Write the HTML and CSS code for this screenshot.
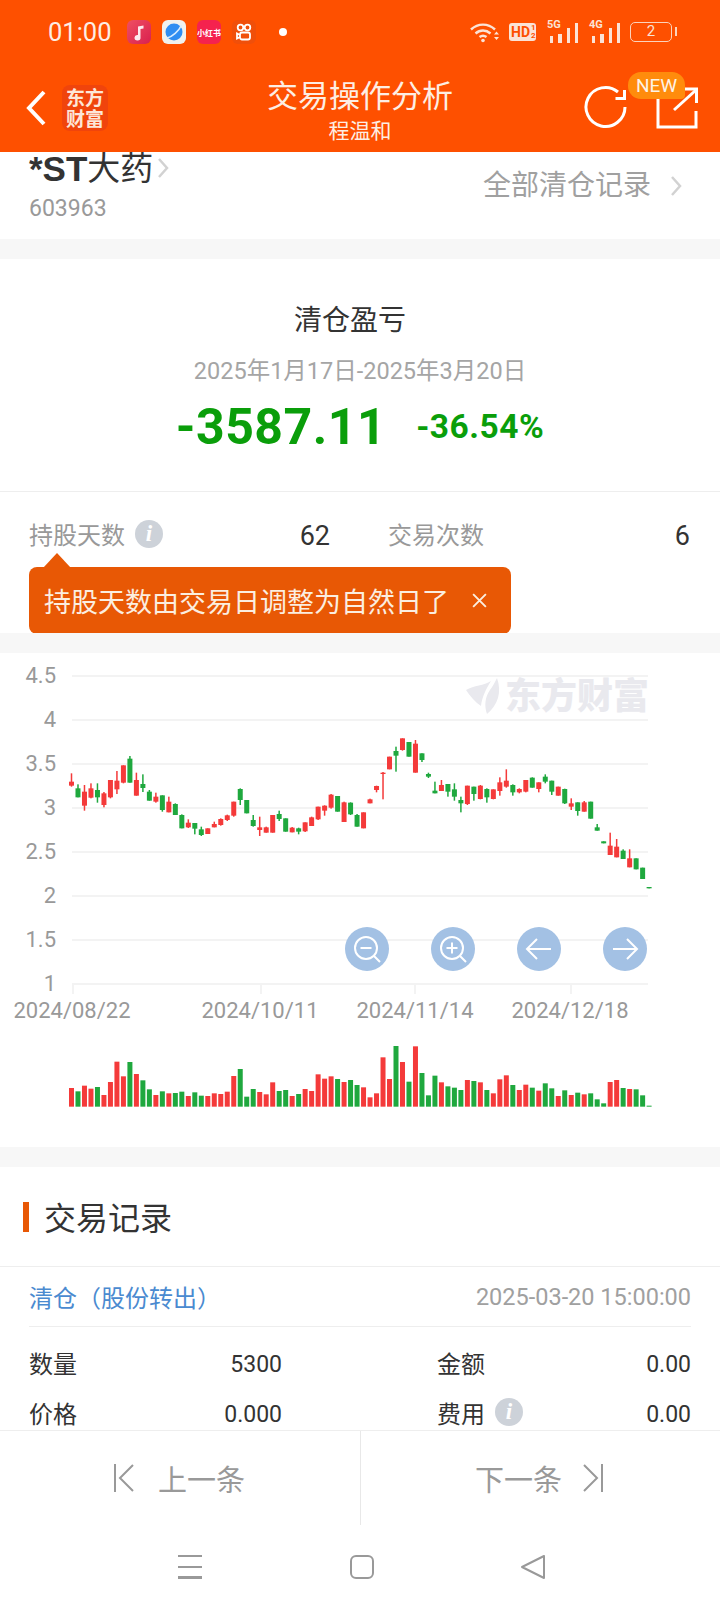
FILE: index.html
```html
<!DOCTYPE html>
<html lang="zh-CN">
  <head>
    <meta charset="UTF-8" />
    <meta name="viewport" content="width=device-width, initial-scale=1.0" />
    <title>交易操作分析</title>
    <link rel="stylesheet" href="styles.css">
  </head>
  <body>
    <header class="app-head">
      <div class="status-bar">
        <span class="clock">01:00</span>
        <span class="app-tile tile-music">
          <svg viewBox="0 0 24 24" width="24" height="24"><path d="M11 17V6.500L16.500 5.500V8.500L13.500 9V17.500A3 2.800 0 1 1 11 15" fill="#fff" opacity=".9"/></svg>
        </span>
        <span class="app-tile tile-planet">
          <svg viewBox="0 0 24 24" width="24" height="24"><circle cx="12" cy="12" r="8.500" fill="#2f8df2"/><path d="M5 18C10 17 17 11 19.500 5" stroke="#d8ecff" stroke-width="1.600" fill="none"/></svg>
        </span>
        <span class="app-tile tile-xhs">小红书</span>
        <span class="app-tile tile-ks">
          <svg viewBox="0 0 24 24" width="24" height="24" fill="none" stroke="#fff" stroke-width="1.800"><circle cx="8.500" cy="7.500" r="2.800"/><circle cx="15.500" cy="7.500" r="2.800"/><rect x="8" y="12.500" width="10" height="7" rx="2"/><path d="M8 15L5 13.500V18.500L8 17"/></svg>
        </span>
        <span class="status-dot"></span>
        <span class="status-right">
          <svg viewBox="0 0 30 24" width="30" height="24" fill="none" stroke="#fbe3d6" stroke-width="2.400"><path d="M1 9.500C8 3 18 3 25 9.500"/><path d="M5.500 13.500C10 9.500 16 9.500 20.500 13.500"/><path d="M9.500 17C11.500 15.500 14.500 15.500 16.500 17"/><circle cx="13" cy="20.500" r="1.800" fill="#fbe3d6" stroke="none"/><path d="M24 14.500H29L26.500 11.500ZM24 17H29L26.500 20Z" fill="#fbe3d6" stroke="none"/></svg>
          <span class="hd-tile">HD<small>1<br>2</small></span>
          <span class="signal"><i class="net">5G</i><i class="bar b1"></i><i class="bar b2"></i><i class="bar b3"></i><i class="bar b4"></i></span>
          <span class="signal"><i class="net">4G</i><i class="bar b1"></i><i class="bar b2"></i><i class="bar b3"></i><i class="bar b4"></i></span>
          <span class="battery">2</span>
        </span>
      </div>

      <div class="title-bar">
        <div class="title-left">
          <svg class="back" viewBox="0 0 20 36" width="20" height="36" fill="none" stroke="#fff" stroke-width="4"><path d="M18 2L3 18L18 34"/></svg>
          <span class="brand-tile">东方<br>财富</span>
        </div>
        <div class="title-text">
          <h1>交易操作分析</h1>
          <p>程温和</p>
        </div>
        <div class="title-right">
          <svg class="refresh" viewBox="0 0 46 46" width="46" height="46" fill="none" stroke="#fff" stroke-width="3"><path d="M42 23A19.500 19.500 0 1 1 35 8"/><path d="M41.500 6V14.500H32.500"/></svg>
          <svg viewBox="0 0 44 44" width="44" height="44" fill="none" stroke="#fff" stroke-width="3"><path d="M3 10V41H41V25"/><path d="M19 24L41 4"/><path d="M28 3H41.500V17"/></svg>
          <span class="new-badge">NEW</span>
        </div>
      </div>
    </header>

    <main class="content">
      <section class="stock-row">
        <div>
          <div class="stock-name"><b>*ST</b>大药<svg class="chevron" viewBox="0 0 12 22" width="12" height="22"><path d="M2 2L10 11L2 20"/></svg></div>
          <div class="stock-code">603963</div>
        </div>
        <a class="all-link">全部清仓记录<svg class="chevron" viewBox="0 0 12 22" width="12" height="22"><path d="M2 2L10 11L2 20"/></svg></a>
      </section>

      <section class="summary">
        <h2>清仓盈亏</h2>
        <p class="period">2025年1月17日-2025年3月20日</p>
        <div class="profit">
          <span class="profit-num">-3587.11</span>
          <span class="profit-pct">-36.54%</span>
        </div>
      </section>

      <section class="holding">
        <div class="holding-row">
          <span class="hold-label">持股天数 <i class="info">i</i></span>
          <span class="hold-val">62</span>
          <span class="hold-label trade-label">交易次数</span>
          <span class="hold-val">6</span>
        </div>
        <div class="tooltip">
          <span>持股天数由交易日调整为自然日了</span>
          <svg viewBox="0 0 16 16" width="17" height="17" fill="none" stroke="#fbeee0" stroke-width="1.800"><path d="M2 2L14 14M14 2L2 14"/></svg>
        </div>
      </section>

      <section class="chart-card">
        <svg id="kline" viewBox="0 653 720 494" width="720" height="494">
          <g class="watermark">
            <path d="M466 690C474 685 484 686 491 681C486 689 482 697 481 706C475 702 470 696 466 690Z"/>
            <path d="M497 678C502 692 498 705 487 714C484 706 485 697 490 690C493 686 495 682 497 678Z"/>
            <text x="505" y="709">东方财富</text>
          </g>
          <g class="grid">
            <line x1="72" x2="648" y1="676" y2="676"/>
            <line x1="72" x2="648" y1="720" y2="720"/>
            <line x1="72" x2="648" y1="764" y2="764"/>
            <line x1="72" x2="648" y1="808" y2="808"/>
            <line x1="72" x2="648" y1="852" y2="852"/>
            <line x1="72" x2="648" y1="896" y2="896"/>
            <line x1="72" x2="648" y1="940" y2="940"/>
            <line x1="72" x2="648" y1="984" y2="984"/>
            <line x1="73" x2="73" y1="984" y2="994"/>
            <line x1="261" x2="261" y1="984" y2="994"/>
            <line x1="415" x2="415" y1="984" y2="994"/>
            <line x1="571" x2="571" y1="984" y2="994"/>
          </g>
          <g class="y-labels">
            <text x="56" y="683">4.5</text>
            <text x="56" y="727">4</text>
            <text x="56" y="771">3.5</text>
            <text x="56" y="815">3</text>
            <text x="56" y="859">2.5</text>
            <text x="56" y="903">2</text>
            <text x="56" y="947">1.5</text>
            <text x="56" y="991">1</text>
          </g>
          <g class="x-labels">
            <text x="72" y="1018">2024/08/22</text>
            <text x="260" y="1018">2024/10/11</text>
            <text x="415" y="1018">2024/11/14</text>
            <text x="570" y="1018">2024/12/18</text>
          </g>
          <g id="candles"></g>
          <g id="volumes"></g>
        </svg>
        <div class="chart-tools">
          <button class="tool-btn">
            <svg viewBox="0 0 44 44" width="44" height="44" fill="none" stroke="#fff" stroke-width="2"><circle cx="21" cy="21" r="11"/><path d="M15.500 21H26.500M29 29L35 35"/></svg>
          </button>
          <button class="tool-btn">
            <svg viewBox="0 0 44 44" width="44" height="44" fill="none" stroke="#fff" stroke-width="2"><circle cx="21" cy="21" r="11"/><path d="M15.500 21H26.500M21 15.500V26.500M29 29L35 35"/></svg>
          </button>
          <button class="tool-btn">
            <svg viewBox="0 0 44 44" width="44" height="44" fill="none" stroke="#fff" stroke-width="2"><path d="M34 22H10M20 12L10 22L20 32"/></svg>
          </button>
          <button class="tool-btn">
            <svg viewBox="0 0 44 44" width="44" height="44" fill="none" stroke="#fff" stroke-width="2"><path d="M10 22H34M24 12L34 22L24 32"/></svg>
          </button>
        </div>
      </section>

      <section class="records">
        <h3 class="records-title">交易记录</h3>
        <div class="record">
          <div class="record-head">
            <a class="record-type">清仓（股份转出）</a>
            <span class="record-time">2025-03-20 15:00:00</span>
          </div>
          <div class="record-grid">
            <div class="cell"><span>数量</span><b>5300</b></div>
            <div class="cell"><span>金额</span><b>0.00</b></div>
            <div class="cell"><span>价格</span><b>0.000</b></div>
            <div class="cell"><span>费用 <i class="info">i</i></span><b>0.00</b></div>
          </div>
        </div>
      </section>
    </main>

    <footer class="pager">
      <a class="pager-btn">
        <svg viewBox="0 0 24 28" width="24" height="28" fill="none" stroke="#999" stroke-width="2"><path d="M2 0V28M20 1L7 14L20 27"/></svg>
        <span>上一条</span>
      </a>
      <a class="pager-btn pager-next">
        <span>下一条</span>
        <svg viewBox="0 0 24 28" width="24" height="28" fill="none" stroke="#999" stroke-width="2"><path d="M22 0V28M4 1L17 14L4 27"/></svg>
      </a>
    </footer>

    <nav class="nav-bar">
      <svg viewBox="0 0 24 24" width="24" height="24" fill="none" stroke="#999" stroke-width="2"><path d="M0 1H24M0 12H24"/><path d="M0 22.500H24" stroke-width="3"/></svg>
      <svg viewBox="0 0 24 24" width="24" height="24" fill="none" stroke="#999" stroke-width="2"><rect x="1" y="1" width="22" height="22" rx="5"/></svg>
      <svg class="nav-back" viewBox="0 0 24 24" width="24" height="24" fill="none" stroke="#999" stroke-width="2" stroke-linejoin="round"><path d="M23 1V23L1 12Z"/></svg>
    </nav>

    <script src="chart.js"></script>
  </body>
</html>
```

FILE: styles.css
```css
* {
  margin: 0;
  padding: 0;
  box-sizing: border-box;
}

html,
body {
  width: 720px;
  height: 1612px;
  overflow: hidden;
}

body {
  display: flex;
  flex-direction: column;
  font-family: Roboto, "Noto Sans CJK SC", sans-serif;
  background-color: #fff;
  color: #333;
}

i {
  font-style: normal;
}

/* orange header */
.app-head {
  background-color: #fe5000;
  color: #fff;
  flex: none;
}

.status-bar {
  height: 64px;
  padding-left: 48px;
  display: flex;
  align-items: center;
}

.clock {
  font-size: 25.500px;
  width: 79px;
  color: #fdeee4;
}

.app-tile {
  width: 24px;
  height: 24px;
  border-radius: 6px;
  margin-right: 11px;
  display: grid;
  place-content: center;
  overflow: hidden;
}

.tile-music {
  background: linear-gradient(135deg, #ef4f62, #d9204f);
}

.tile-planet {
  background-color: #f1f1ee;
}

.tile-xhs {
  background-color: #f5224e;
  font-size: 8px;
  font-weight: 700;
  white-space: nowrap;
}

.tile-ks {
  background-color: #f04f0a;
}

.status-dot {
  width: 8px;
  height: 8px;
  border-radius: 50%;
  background-color: #fff;
  margin-left: 12px;
}

.status-right {
  margin-left: auto;
  margin-right: 48px;
  display: flex;
  align-items: center;
}

.hd-tile {
  width: 27px;
  height: 18px;
  margin-left: 9px;
  border-radius: 3px;
  background-color: #fbe3d6;
  color: #fe5000;
  font-size: 14px;
  font-weight: 700;
  line-height: 18px;
  display: flex;
  padding-left: 2px;
  overflow: hidden;
}

.hd-tile small {
  font-size: 8px;
  line-height: 8px;
  margin-left: 1px;
  padding-top: 1px;
}

.signal {
  position: relative;
  width: 31px;
  height: 22px;
  margin-left: 11px;
  display: flex;
  align-items: flex-end;
  gap: 5px;
  padding-left: 3px;
}

.bar {
  width: 3.500px;
  background-color: #fbe3d6;
}

.b1 {
  height: 7px;
}

.b2 {
  height: 9px;
}

.b3 {
  height: 15px;
}

.b4 {
  height: 20px;
}

.net {
  position: absolute;
  left: 0;
  top: -2px;
  font-size: 11px;
  font-weight: 700;
  color: #fbe3d6;
  line-height: 12px;
}

.battery {
  width: 42px;
  height: 20px;
  margin-left: 10px;
  border: 1.500px solid #fbd3bd;
  border-radius: 5px;
  font-size: 15px;
  line-height: 17px;
  text-align: center;
  color: #fbe3d6;
  position: relative;
}

.battery::after {
  content: "";
  position: absolute;
  right: -6px;
  top: 4px;
  width: 2px;
  height: 9px;
  background-color: #fbd3bd;
}

.title-bar {
  height: 88px;
  display: grid;
  grid-template-columns: 200px 320px 200px;
  position: relative;
}

.title-left {
  display: flex;
  align-items: center;
  padding-left: 26px;
  gap: 16px;
}

.brand-tile {
  width: 46px;
  height: 46px;
  border-radius: 8px;
  background-color: #f0440c;
  color: #fde6d8;
  font-size: 19px;
  font-weight: 700;
  line-height: 21px;
  text-align: center;
  padding-top: 3px;
}

.title-text {
  text-align: center;
}

.title-text h1 {
  font-size: 31px;
  font-weight: 400;
  line-height: 36px;
  margin-top: 15px;
  color: #fdeee4;
}

.title-text p {
  font-size: 21px;
  line-height: 28px;
  margin-top: 2px;
  color: #fdeee4;
}

.title-right {
  display: flex;
  align-items: center;
  justify-content: flex-end;
  gap: 26px;
  padding-right: 21px;
}

.refresh {
  margin-top: -2px;
}

.new-badge {
  position: absolute;
  left: 628px;
  top: 8px;
  width: 57px;
  height: 27px;
  border-radius: 13px 13px 4px 13px;
  background-color: #ff8c0c;
  font-size: 19px;
  line-height: 27px;
  text-align: center;
  color: #fdf3e6;
}

/* scrolling area */
.content {
  flex: 1;
}

.stock-row {
  height: 87px;
  padding: 0 38px 0 29px;
  display: flex;
  justify-content: space-between;
}

.stock-name {
  font-size: 33px;
  line-height: 34px;
  font-weight: 400;
  display: flex;
  align-items: flex-start;
}

.stock-name b {
  font-family: "Liberation Sans", sans-serif;
  font-size: 35px;
  font-weight: 700;
}

.stock-name .chevron {
  margin: 5px 0 0 4px;
}

.stock-code {
  font-size: 23px;
  line-height: 28px;
  color: #999;
  margin-top: 9px;
}

.chevron {
  fill: none;
  stroke: #d2d2d2;
  stroke-width: 2.500;
}

.all-link {
  font-size: 28px;
  line-height: 34px;
  color: #a0a0a0;
  display: flex;
  align-items: center;
  gap: 19px;
  height: 34px;
  margin-top: 17px;
}

.summary {
  border-top: 20px solid #f7f7f7;
  height: 253px;
  border-bottom: 1px solid #eee;
  text-align: center;
}

.summary h2 {
  font-size: 28px;
  font-weight: 400;
  line-height: 36px;
  padding: 44px 20px 0 0;
  height: 78px;
}

.period {
  font-size: 23.500px;
  line-height: 32px;
  color: #a5a5a5;
  margin-top: 18px;
}

.profit {
  display: flex;
  justify-content: center;
  align-items: center;
  gap: 30px;
  color: #0a9e0a;
  font-weight: 700;
  height: 60px;
  margin-top: 10px;
}

.profit-num {
  font-size: 50px;
  letter-spacing: 0.500px;
}

.profit-pct {
  font-size: 33.500px;
  letter-spacing: 0.500px;
  padding-bottom: 2px;
}

.holding {
  height: 141px;
  position: relative;
}

.holding-row {
  display: grid;
  grid-template-columns: 211px 90px 1fr auto;
  padding: 24px 30px 0 29px;
  align-items: center;
  height: 62px;
}

.hold-label {
  font-size: 24px;
  color: #999;
  display: flex;
  align-items: center;
  gap: 10px;
  padding-bottom: 4px;
}

.trade-label {
  padding-left: 58px;
}

.hold-val {
  font-size: 27px;
  text-align: right;
}

.info {
  width: 28px;
  height: 28px;
  border-radius: 50%;
  background-color: #cdd2d9;
  color: #fff;
  font-family: "Liberation Serif", serif;
  font-style: italic;
  font-weight: 700;
  font-size: 23px;
  line-height: 28px;
  text-align: center;
  display: inline-block;
}

.tooltip {
  position: absolute;
  left: 29px;
  top: 75px;
  width: 482px;
  height: 67px;
  background-color: #e85805;
  border-radius: 8px;
  color: #fbeee0;
  font-size: 27px;
  display: flex;
  align-items: center;
  justify-content: space-between;
  padding: 0 23px 0 15px;
}

.tooltip::before {
  content: "";
  position: absolute;
  left: 14px;
  top: -14px;
  border-left: 14px solid transparent;
  border-right: 14px solid transparent;
  border-bottom: 15px solid #e85805;
}

.chart-card {
  border-top: 20px solid #f7f7f7;
  border-bottom: 20px solid #f7f7f7;
  height: 534px;
  position: relative;
}

#kline {
  display: block;
}

.grid line {
  stroke: #f3f3f3;
  stroke-width: 2;
}

.y-labels text {
  font-size: 22px;
  fill: #999;
  text-anchor: end;
}

.x-labels text {
  font-size: 22px;
  fill: #999;
  text-anchor: middle;
}

.watermark {
  fill: #e9e9ee;
}

.watermark text {
  font-size: 36px;
  font-weight: 900;
}

.chart-tools {
  position: absolute;
  left: 345px;
  top: 274px;
  display: flex;
  gap: 42px;
}

.tool-btn {
  width: 44px;
  height: 44px;
  border: 0;
  border-radius: 50%;
  background-color: #a3c1e4;
  display: block;
}

/* the pager sits right under the list, the second row runs up to it */
.records {
  height: 263px;
  overflow: hidden;
}

.records-title {
  font-size: 32px;
  font-weight: 400;
  line-height: 40px;
  height: 100px;
  padding: 32px 0 0 23px;
  border-bottom: 1px solid #eee;
  display: flex;
  gap: 15px;
}

.records-title::before {
  content: "";
  width: 6px;
  height: 30px;
  margin-top: 3px;
  background-color: #e85805;
}

.record {
  padding: 0 29px;
}

.record-head {
  height: 60px;
  display: flex;
  justify-content: space-between;
  align-items: center;
  border-bottom: 1px solid #eee;
}

.record-type {
  font-size: 24px;
  color: #4a8ad0;
}

.record-time {
  font-size: 23.500px;
  color: #a0a0a0;
}

.record-grid {
  display: grid;
  grid-template-columns: 253px 1fr;
  column-gap: 155px;
  padding-top: 12px;
  grid-auto-rows: 50px;
}

.cell {
  display: flex;
  justify-content: space-between;
  align-items: center;
  font-size: 24px;
}

.cell span {
  display: flex;
  align-items: center;
  gap: 10px;
  padding-bottom: 4px;
}

.cell b {
  font-weight: 400;
  font-size: 23px;
}

/* bottom */
.pager {
  height: 95px;
  flex: none;
  border-top: 1px solid #eee;
  display: grid;
  grid-template-columns: 360px 360px;
}

.pager-btn {
  display: flex;
  align-items: center;
  gap: 21px;
  padding-left: 113px;
  font-size: 29px;
  color: #999;
}

.pager-next {
  border-left: 1px solid #e8e8e8;
  padding-left: 114px;
  gap: 18px;
}

.nav-bar {
  height: 87px;
  flex: none;
  display: flex;
  padding: 30px 0 0 178px;
  gap: 148px;
}

.nav-back {
  margin-left: -1px;
}
```

FILE: chart.js
```js
const SVG_NS = "http://www.w3.org/2000/svg";
const RED = "#f43a3a";
const GREEN = "#1fa83e";

// color, wick top, body top, body bottom, wick bottom
// y values are measured at 3x from y=640
const candles = [
  ["r",400,425,437,440],["g",433,445,472,472],["r",435,455,497,512],["r",430,445,473,475],
  ["g",430,450,472,488],["r",456,460,495,502],["r",420,420,472,475],["r",393,422,448,462],
  ["r",376,376,428,430],["g",348,356,428,428],["r",398,420,467,467],["g",403,432,444,456],
  ["g",450,455,482,482],["r",458,470,485,488],["g",466,466,510,515],["r",470,485,517,517],
  ["g",490,492,525,525],["g",523,525,565,565],["r",538,548,562,564],["g",549,549,566,583],
  ["g",560,568,585,588],["r",565,565,582,582],["r",545,552,562,562],["r",535,537,555,557],
  ["r",524,526,540,543],["r",485,485,527,530],["g",445,447,480,495],["g",480,480,520,520],
  ["g",525,540,558,560],["r",530,562,570,588],["r",560,562,578,578],["r",525,525,578,578],
  ["g",512,522,537,543],["g",535,535,575,575],["r",561,563,577,577],["g",563,565,575,583],
  ["r",547,547,574,576],["r",530,532,558,558],["r",500,500,538,540],["r",496,497,512,527],
  ["r",462,464,503,506],["g",468,468,515,515],["r",485,487,546,546],["g",487,488,523,525],
  ["g",522,525,560,560],["r",517,517,565,565],["r",476,478,490,490],["r",437,438,450,457],
  ["r",396,398,402,478],["r",350,350,388,388],["g",320,333,347,395],["r",295,295,330,332],
  ["g",306,306,350,350],["r",300,311,398,398],["g",340,340,360,366],["g",398,402,410,414],
  ["g",425,452,460,460],["r",420,435,453,453],["g",432,432,455,470],["g",430,448,470,482],
  ["g",470,480,490,517],["r",437,437,492,495],["g",440,440,462,482],["r",435,437,477,478],
  ["g",445,447,472,488],["r",448,448,477,478],["r",412,427,453,467],["r",388,422,440,443],
  ["g",433,435,457,467],["r",445,447,457,460],["r",420,420,455,457],["g",412,413,443,443],
  ["r",427,427,447,457],["g",403,410,425,430],["g",422,422,455,465],["r",440,440,467,467],
  ["g",446,447,490,492],["r",475,490,500,510],["g",487,487,513,527],["r",483,487,515,515],
  ["g",485,485,536,536],["g",552,562,572,572],["g",604,604,610,610],["r",578,617,645,645],
  ["r",597,620,652,652],["g",628,632,657,657],["r",628,655,682,682],["g",655,655,688,688],
  ["g",683,683,717,717],["g",741,741,745,745]
];

// volume bar tops, measured at 3x from y=880, baseline is 680
const volumes = [
  624,634,617,626,621,645,606,545,589,546,582,601,628,645,634,640,639,635,648,637,
  647,648,640,642,635,588,567,650,627,636,643,607,633,630,648,642,627,633,583,596,
  589,597,606,600,615,622,652,640,532,597,498,546,605,499,579,646,587,607,619,623,
  630,600,603,607,630,640,598,586,615,630,614,623,632,610,625,648,631,645,638,643,
  640,658,670,606,600,624,627,628,646,677
];

const addRect = (parent, x, y, width, height, fill) => {
  const rect = document.createElementNS(SVG_NS, "rect");
  rect.setAttribute("x", x);
  rect.setAttribute("y", y);
  rect.setAttribute("width", width);
  rect.setAttribute("height", Math.max(height, 1));
  rect.setAttribute("fill", fill);
  parent.appendChild(rect);
};

const columnX = (i) => 71.5 + i * 6.49;

const candleGroup = document.getElementById("candles");
candles.forEach(([color, wickTop, bodyTop, bodyBottom, wickBottom], i) => {
  const fill = color === "r" ? RED : GREEN;
  const x = columnX(i);
  const y = (v) => 640 + v / 3;
  addRect(candleGroup, x - 0.75, y(wickTop), 1.5, (wickBottom - wickTop) / 3, fill);
  addRect(candleGroup, x - 2.5, y(bodyTop), 5, (bodyBottom - bodyTop) / 3, fill);
});

const volumeGroup = document.getElementById("volumes");
volumes.forEach((top, i) => {
  const fill = candles[i][0] === "r" ? RED : GREEN;
  addRect(volumeGroup, columnX(i) - 2.5, 880 + top / 3, 5, (680 - top) / 3, fill);
});
```
